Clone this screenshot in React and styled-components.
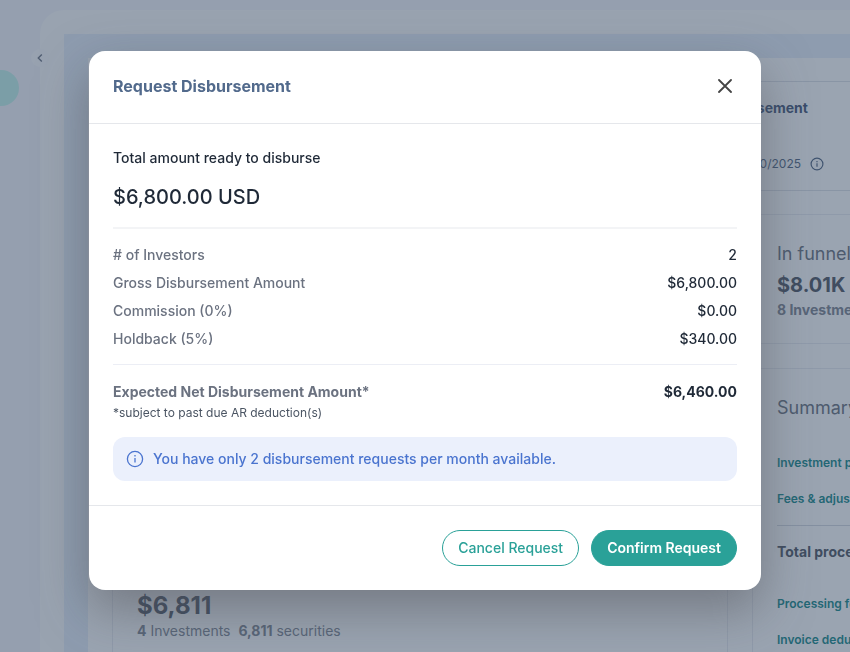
import React from "react";
import styled, { createGlobalStyle } from "styled-components";

const GlobalStyle = createGlobalStyle`
  * { box-sizing: border-box; }
  body {
    margin: 0;
    overflow: hidden;
    font-family: Inter, "Liberation Sans", sans-serif;
    color: #1f2937;
    background: #f4f5fa;
  }
  h1, h2, h3, p, dl, dd { margin: 0; }
  button { font-family: inherit; cursor: pointer; }
`;

/* ---------- Dashboard ---------- */

const Shell = styled.div`
  display: flex;
  height: 100vh;
  padding-top: 10px;
  overflow: hidden;
  background: #f4f5fa;
`;

const Sidebar = styled.nav`
  position: relative;
  flex: none;
  width: 40px;
`;

const NavButton = styled.button`
  width: 36px;
  height: 36px;
  margin: 60px 0 0 -17px;
  padding: 0;
  border: 0;
  border-radius: 50%;
  background: #c0f2ea;
`;

const CollapseButton = styled.button`
  position: absolute;
  z-index: 1;
  top: 39px;
  right: -9px;
  display: grid;
  place-items: center;
  width: 18px;
  height: 18px;
  padding: 0;
  border: 0;
  border-radius: 50%;
  background: #fafafd;
  color: #6b7280;
`;

const Main = styled.main`
  flex: 1;
  min-width: 0;
  padding: 24px 0 0 24px;
  border-radius: 24px 0 0 0;
  background: #fcfcfd;
`;

const Canvas = styled.div`
  height: 100%;
  padding: 24px 0 0 24px;
  background: #e6effa;
`;

const Sheet = styled.div`
  display: flex;
  flex-direction: column;
  gap: 23px;
  height: 100%;
  padding: 23px 0 0 24px;
  background: #fff;
`;

const Columns = styled.div`
  flex: 1;
  display: grid;
  grid-template-columns: minmax(0, 1fr) 98px;
  grid-template-rows: minmax(0, 1fr);
  gap: 24px;
  min-height: 0;
`;

const Panel = styled.section`
  padding: 24px;
  border: 1px solid #e9ebf0;
  border-right-width: ${(p) => (p.$open ? 0 : "1px")};
  border-radius: ${(p) => (p.$open ? "6px 0 0 6px" : "6px")};
  white-space: nowrap;
`;

const DateBar = styled.section`
  display: flex;
  justify-content: flex-end;
  height: 110px;
  padding: 16px 26px 0 0;
  border: 1px solid #dde0e7;
  border-right: 0;
`;

const DateTitle = styled.h3`
  margin-bottom: 36px;
  font-size: 14px;
  line-height: 20px;
  color: #3c4f72;
`;

const DateLine = styled.p`
  display: flex;
  align-items: center;
  gap: 9px;
  font-size: 12px;
  line-height: 20px;
  color: #4b5f7c;
`;

const Side = styled.div`
  display: flex;
  flex-direction: column;
  gap: 24px;
  min-width: 0;
`;

const PanelTitle = styled.h3`
  font-size: 18px;
  font-weight: 400;
  line-height: 30px;
  color: #666d79;
`;

const Figure = styled.p`
  font-size: ${(p) => (p.$large ? "24px" : "20px")};
  font-weight: 700;
  line-height: 32px;
  color: #4a505c;
`;

const Caption = styled.p`
  font-size: 14px;
  font-weight: ${(p) => (p.$bold ? 700 : 400)};
  line-height: 18px;
  color: #7a808c;
`;

const Issued = styled(Panel)`
  display: flex;
  flex-direction: column;
  justify-content: flex-end;
  padding: 0 24px 12px;
  border-bottom: 0;
  border-radius: 6px 6px 0 0;
`;

const Fees = styled.div`
  display: flex;
  flex-direction: column;
  gap: 16px;
  padding: ${(p) => (p.$first ? "30px 0 16px" : "32px 0 0")};
`;

const FeeLink = styled.a`
  font-size: 12px;
  font-weight: 600;
  line-height: 20px;
  color: #0e8586;
  text-decoration: none;
`;

const TotalLine = styled.h3`
  margin-right: -24px;
  padding-top: 16px;
  border-top: 1px solid #d3d7df;
  font-size: 14px;
  line-height: 20px;
  color: #4a505c;
`;

/* ---------- Dialog ---------- */

const Overlay = styled.div`
  position: fixed;
  inset: 0;
  z-index: 10;
  display: flex;
  justify-content: center;
  align-items: flex-start;
  padding: 51px 24px 24px;
  background: rgba(54, 73, 99, 0.5);
`;

const Dialog = styled.div`
  width: 100%;
  max-width: 672px;
  border-radius: 16px;
  background: #fff;
  box-shadow: 0 20px 50px rgba(80, 80, 85, 0.5);
`;

const DialogHeader = styled.header`
  display: flex;
  align-items: center;
  justify-content: space-between;
  height: 73px;
  padding: 0 24px 2px;
  border-bottom: 1px solid #e5e7eb;
`;

const DialogTitle = styled.h1`
  font-size: 16px;
  font-weight: 700;
  line-height: 24px;
  color: #526a8c;
`;

const CloseButton = styled.button`
  display: grid;
  place-items: center;
  width: 24px;
  height: 24px;
  padding: 0;
  border: 0;
  background: none;
  color: #444;
`;

const DialogBody = styled.div`
  padding: 24px;
`;

const Total = styled.div`
  padding-bottom: 16px;
  border-bottom: 2px solid #f3f4f6;
`;

const TotalLabel = styled.h2`
  margin-bottom: 15px;
  font-size: 14px;
  font-weight: 500;
  line-height: 20px;
`;

const TotalAmount = styled.p`
  font-size: 20px;
  font-weight: 500;
  line-height: 28px;
`;

const Breakdown = styled.dl`
  display: flex;
  flex-direction: column;
  gap: 8px;
  padding: 16px 0 15px;
  border-bottom: 1px solid #eceef5;
`;

const Row = styled.div`
  display: flex;
  justify-content: space-between;
  font-size: 14px;
  font-weight: ${(p) => (p.$strong ? 700 : 500)};
  line-height: 20px;
`;

const Term = styled.dt`
  color: #6b7280;
`;

const Net = styled.dl`
  padding-top: 17px;
`;

const Note = styled.p`
  margin: 2px 0 15px;
  font-size: 12px;
  line-height: 18px;
  color: #4b5563;
`;

const Notice = styled.p`
  display: flex;
  align-items: center;
  gap: 9px;
  min-height: 44px;
  padding: 12px 13px;
  border-radius: 12px;
  background: #ebf0fc;
  font-size: 14px;
  font-weight: 500;
  line-height: 20px;
  color: #4a74cf;
`;

const DialogFooter = styled.footer`
  display: flex;
  justify-content: flex-end;
  gap: 12px;
  padding: 24px;
  border-top: 1px solid #e5e7eb;
`;

const Action = styled.button`
  height: 36px;
  padding: 0 15px;
  border: 1px solid #2aa198;
  border-radius: 18px;
  background: ${(p) => (p.$primary ? "#2aa198" : "#fff")};
  color: ${(p) => (p.$primary ? "#fff" : "#2aa198")};
  font-size: 14px;
  font-weight: ${(p) => (p.$primary ? 600 : 500)};
  line-height: 20px;
`;

function InfoIcon({ size, stroke = 1.3 }) {
  return (
    <svg width={size} height={size} viewBox="0 0 18 18" fill="none" stroke="currentColor" strokeWidth={stroke} aria-hidden="true">
      <circle cx="9" cy="9" r="7.6" />
      <path d="M9 8v4.6" />
      <path d="M9 5.1v1.5" />
    </svg>
  );
}

const breakdown = [
  ["# of Investors", "2"],
  ["Gross Disbursement Amount", "$6,800.00"],
  ["Commission (0%)", "$0.00"],
  ["Holdback (5%)", "$340.00"],
];

function Dashboard() {
  return (
    <Shell>
      <Sidebar>
        <NavButton type="button" aria-label="Home" />
        <CollapseButton type="button" aria-label="Collapse menu">
          <svg width="8" height="10" viewBox="0 0 8 10" fill="none" stroke="currentColor" strokeWidth="1.4" aria-hidden="true">
            <path d="M5.8 1.5 2.3 5l3.5 3.5" />
          </svg>
        </CollapseButton>
      </Sidebar>
      <Main>
        <Canvas>
          <Sheet>
            <DateBar>
              <div>
                <DateTitle>Disbursement</DateTitle>
                <DateLine>
                  Due 10/10/2025
                  <InfoIcon size={14} stroke={1.5} />
                </DateLine>
              </div>
            </DateBar>
            <Columns>
              <Issued>
                <Figure $large>$6,811</Figure>
                <Caption>
                  <b>4</b> Investments&nbsp; <b>6,811</b> securities
                </Caption>
              </Issued>
              <Side>
                <Panel $open>
                  <PanelTitle>In funnel</PanelTitle>
                  <Figure>$8.01K</Figure>
                  <Caption $bold>8 Investments</Caption>
                </Panel>
                <Panel $open>
                  <PanelTitle>Summary</PanelTitle>
                  <Fees $first>
                    <FeeLink href="#payments">Investment payments</FeeLink>
                    <FeeLink href="#fees">Fees &amp; adjustments</FeeLink>
                  </Fees>
                  <TotalLine>Total processed</TotalLine>
                  <Fees>
                    <FeeLink href="#processing">Processing fees</FeeLink>
                    <FeeLink href="#invoice">Invoice deductions</FeeLink>
                  </Fees>
                </Panel>
              </Side>
            </Columns>
          </Sheet>
        </Canvas>
      </Main>
    </Shell>
  );
}

export default function App() {
  return (
    <>
      <GlobalStyle />
      <Dashboard />
      <Overlay>
        <Dialog role="dialog" aria-modal="true" aria-labelledby="dialog-title">
          <DialogHeader>
            <DialogTitle id="dialog-title">Request Disbursement</DialogTitle>
            <CloseButton type="button" aria-label="Close">
              <svg width="14" height="14" viewBox="0 0 14 14" fill="none" stroke="currentColor" strokeWidth="1.8" strokeLinecap="round" aria-hidden="true">
                <path d="M1 1l12 12M13 1 1 13" />
              </svg>
            </CloseButton>
          </DialogHeader>
          <DialogBody>
            <Total>
              <TotalLabel>Total amount ready to disburse</TotalLabel>
              <TotalAmount>$6,800.00 USD</TotalAmount>
            </Total>
            <Breakdown>
              {breakdown.map(([label, value]) => (
                <Row key={label}>
                  <Term>{label}</Term>
                  <dd>{value}</dd>
                </Row>
              ))}
            </Breakdown>
            <Net>
              <Row $strong>
                <Term>Expected Net Disbursement Amount*</Term>
                <dd>$6,460.00</dd>
              </Row>
            </Net>
            <Note>*subject to past due AR deduction(s)</Note>
            <Notice>
              <InfoIcon size={18} />
              You have only 2 disbursement requests per month available.
            </Notice>
          </DialogBody>
          <DialogFooter>
            <Action type="button">Cancel Request</Action>
            <Action type="button" $primary>Confirm Request</Action>
          </DialogFooter>
        </Dialog>
      </Overlay>
    </>
  );
}
